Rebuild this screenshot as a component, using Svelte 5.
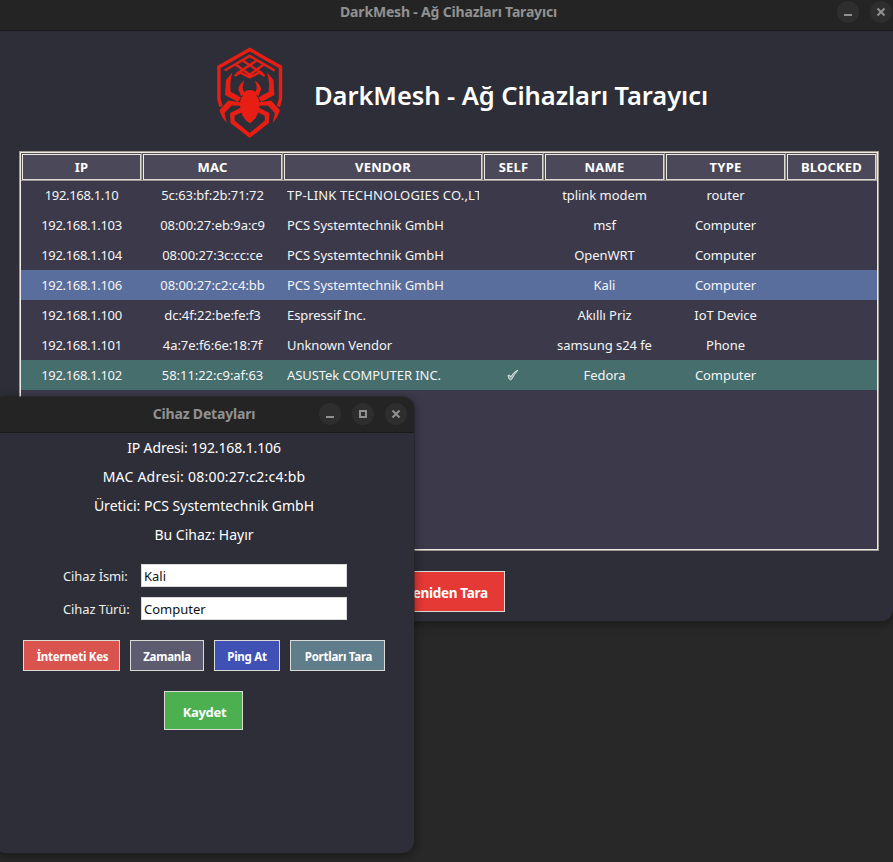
<script>
  const columns = [
    { name: 'IP', w: 121 },
    { name: 'MAC', w: 141 },
    { name: 'VENDOR', w: 200 },
    { name: 'SELF', w: 61 },
    { name: 'NAME', w: 121 },
    { name: 'TYPE', w: 121 },
    { name: 'BLOCKED', w: 91 }
  ];
  const template = columns.map((c) => c.w + 'px').join(' ');
  const devices = [
    ['192.168.1.10', '5c:63:bf:2b:71:72', 'TP-LINK TECHNOLOGIES CO.,LT', '', 'tplink modem', 'router', ''],
    ['192.168.1.103', '08:00:27:eb:9a:c9', 'PCS Systemtechnik GmbH', '', 'msf', 'Computer', ''],
    ['192.168.1.104', '08:00:27:3c:cc:ce', 'PCS Systemtechnik GmbH', '', 'OpenWRT', 'Computer', ''],
    ['192.168.1.106', '08:00:27:c2:c4:bb', 'PCS Systemtechnik GmbH', '', 'Kali', 'Computer', ''],
    ['192.168.1.100', 'dc:4f:22:be:fe:f3', 'Espressif Inc.', '', 'Akıllı Priz', 'IoT Device', ''],
    ['192.168.1.101', '4a:7e:f6:6e:18:7f', 'Unknown Vendor', '', 'samsung s24 fe', 'Phone', ''],
    ['192.168.1.102', '58:11:22:c9:af:63', 'ASUSTek COMPUTER INC.', '✓', 'Fedora', 'Computer', '']
  ];
  const details = [
    { text: 'IP Adresi: 192.168.1.106', cls: 'tight' },
    { text: 'MAC Adresi: 08:00:27:c2:c4:bb', cls: 'wide' },
    { text: 'Üretici: PCS Systemtechnik GmbH', cls: '' },
    { text: 'Bu Cihaz: Hayır', cls: '' }
  ];
</script>

{#snippet control(kind)}
  <span class="control">
    <svg width="22" height="22" viewBox="0 0 22 22">
      {#if kind === 'min'}
        <path d="M7 14h8" />
      {:else if kind === 'max'}
        <path d="M8 8h6v6H8z" />
      {:else}
        <path d="M7.5 7.5l7 7M14.5 7.5l-7 7" />
      {/if}
    </svg>
  </span>
{/snippet}

{#snippet legs()}
  <path d="M16.300 24.500L10 32L9 47L22 54L25 49.500L14.700 43.700Q13.500 35 16.300 24.500z" />
  <path d="M28.500 32.500Q22 37 22.500 42L25 48L29 46L26.500 40Q27 36 28.500 32.500z" />
  <path d="M25 54.500L12.300 52.500L3.500 62Q5 69 10.700 74.500L8.500 65L15.700 57.500L25 57.800z" />
  <path d="M25 59.500L14 65L14.500 75L33.700 90V85L18.500 72.500L18.800 67.500L25.500 64.500z" />
{/snippet}

<div class="desktop">
  <section class="main">
    <header class="bar">
      <span class="caption">DarkMesh - Ağ Cihazları Tarayıcı</span>
      <div class="controls">{@render control('min')}{@render control('close')}</div>
    </header>
    <div class="brand">
      <svg class="logo" width="68" height="92" viewBox="0 0 68 92">
        <g fill="none" stroke="#e81e14">
          <path stroke-width="3.400" d="M5 58.500L2.900 51V19L33.700 1.500L64.500 19V51L62.400 58.500" />
          <path stroke-width="2.400" d="M8.700 22.500L33.700 8L58.700 22.500M26 12L47 26M19 16L36 28.500M41.400 12L20.400 26M48.400 16L31.400 28.500M18.700 28L24 24.500L33.700 29.500L43.400 24.500L48.700 28" />
        </g>
        <g fill="#e81e14">
          <path d="M33.700 42q6.500 0 7 6q3 3 2.700 9q-.5 13-9.700 18.300Q24.500 70 24 57q-.3-6 2.700-9q.5-6 7-6z" />
          {@render legs()}
          <g transform="translate(67.4 0) scale(-1 1)">{@render legs()}</g>
        </g>
      </svg>
      <h1>DarkMesh - Ağ Cihazları Tarayıcı</h1>
    </div>
    <div class="table">
      <div class="row head" style:grid-template-columns={template}>
        {#each columns as c}<div class="th"><span>{c.name}</span></div>{/each}
      </div>
      {#each devices as d, i}
        <div class="row" class:selected={i === 3} class:self={i === 6} style:grid-template-columns={template}>
          {#each d as cell, j}
            <div class="td c{j}" class:long={cell.length > 24}>
              {#if cell === '✓'}
                <svg class="check" width="14" height="14" viewBox="0 0 14 14"><path d="M2 7.500Q4 6 4.700 9Q7.500 3.800 12 2Q8.500 6 5.500 11.500Q3 13 2 7.500z" fill="#8da5a3" stroke="#dce6e5" stroke-width="1" /></svg>
              {:else}{cell}{/if}
            </div>
          {/each}
        </div>
      {/each}
    </div>
    <div class="scan"><button class="rescan">Yeniden Tara</button></div>
  </section>

  <section class="dialog">
    <header class="bar">
      <span class="caption">Cihaz Detayları</span>
      <div class="controls">{@render control('min')}{@render control('max')}{@render control('close')}</div>
    </header>
    <div class="details">
      {#each details as line}<p class={line.cls}>{line.text}</p>{/each}
    </div>
    <div class="form">
      <label><span>Cihaz İsmi:</span><input value="Kali" /></label>
      <label><span>Cihaz Türü:</span><input value="Computer" /></label>
    </div>
    <div class="actions">
      <button class="cut">İnterneti Kes</button>
      <button class="plan">Zamanla</button>
      <button class="ping">Ping At</button>
      <button class="ports">Portları Tara</button>
    </div>
    <button class="save">Kaydet</button>
  </section>
</div>

<style>
  :global(body) { margin: 0; background: #282828; }
  .desktop {
    position: relative;
    width: 893px;
    height: 862px;
    overflow: hidden;
    background: #282828;
    color: #fff;
    font-family: 'Noto Sans', sans-serif;
    font-size: 13px;
  }
  .desktop * { box-sizing: border-box; }
  .main {
    height: 621px;
    background: #2e2e38;
    border-radius: 0 0 12px 0;
    box-shadow: 0 2px 9px 2px rgba(0, 0, 0, 0.3);
    overflow: hidden;
  }
  .bar {
    position: relative;
    display: flex;
    align-items: center;
    justify-content: center;
    background: #242424;
    border-bottom: 1px solid #19191a;
    color: #919191;
    font-size: 14px;
    font-weight: 700;
    letter-spacing: -0.18px;
    white-space: nowrap;
  }
  .main .bar { height: 31px; padding: 0 0 7px 4px; }
  .controls { position: absolute; display: flex; gap: 11px; }
  .main .controls { top: 1px; right: 1px; }
  .control { display: flex; width: 22px; height: 22px; border-radius: 50%; background: #2e2e2e; }
  .control path { fill: none; stroke: #919191; stroke-width: 2; }
  .brand { display: flex; align-items: center; height: 120px; padding-left: 216px; gap: 30px; }
  .logo { flex: none; margin-top: 6px; overflow: visible; }
  h1 { margin: 7px 0 0; font-size: 25.5px; line-height: 36px; font-weight: 600; letter-spacing: -0.07px; white-space: nowrap; }
  .table {
    width: 860px;
    height: 400px;
    margin-left: 19px;
    border: 1px solid #9e9a91;
    background: #3c3a4a;
    box-shadow: inset 0 0 0 1px #eeebe7;
    padding: 1px;
  }
  .row { display: grid; height: 30px; }
  .head { height: 27px; background: #55534f; }
  .th {
    border: 1px solid #9e9a91;
    border-width: 0 1px 1px 0;
    padding: 1px 0 0 1px;
    font-weight: 700;
    letter-spacing: 0.2px;
    height: 28px;
    margin-bottom: -1px;
  }
  .th span {
    display: flex;
    align-items: center;
    justify-content: center;
    height: 100%;
    border: 1px solid #eeebe7;
    border-right-color: #dcdad5;
    border-bottom-color: #dcdad5;
    background: #4b4959;
  }
  .td {
    display: flex;
    align-items: center;
    justify-content: center;
    margin: 0 4px;
    overflow: hidden;
    white-space: nowrap;
    color: #f4f4f5;
    letter-spacing: -0.06px;
  }
  .c0 { letter-spacing: -0.32px; }
  .c2 { justify-content: flex-start; }
  .long { letter-spacing: 0.16px; }
  .check { position: relative; left: -1px; }
  .selected { background: #5a6e9e; }
  .self { background: #456e6d; }
  .scan { display: flex; padding: 20px 0 0 388px; }
  button, input { font: inherit; }
  button { border: 1px solid #dcdad5; color: #fff; font-weight: 700; padding: 2px 0 0; white-space: nowrap; }
  .rescan { width: 117px; height: 41px; background: #e53935; font-size: 13.5px; letter-spacing: -0.32px; }
  .dialog {
    position: absolute;
    left: -6px;
    top: 397px;
    width: 420px;
    height: 456px;
    display: flex;
    flex-direction: column;
    align-items: center;
    border-radius: 12px;
    background: #2e2e38;
    box-shadow: 0 0 0 1px rgba(34, 34, 34, 0.5), 0 2px 9px 2px rgba(0, 0, 0, 0.32);
  }
  .dialog .bar { width: 100%; height: 36px; padding: 0 0 3px; border-radius: 12px 12px 0 0; }
  .dialog .controls { top: 6px; right: 7px; }
  .details { text-align: center; font-size: 14px; }
  p { margin: 0; height: 29px; line-height: 29px; white-space: nowrap; }
  .tight { letter-spacing: -0.13px; }
  .wide { letter-spacing: 0.23px; }
  .form { display: flex; flex-direction: column; gap: 10px; margin-top: 15px; padding-left: 2px; }
  label { display: flex; align-items: center; height: 23px; letter-spacing: -0.12px; }
  label span { width: 78px; color: #eee; white-space: nowrap; }
  input { width: 206px; height: 23px; border: 1px solid #dcdad5; background: #fff; color: #111; padding: 0 2px; border-radius: 0; outline: 0; }
  .actions { display: flex; gap: 10px; margin: 20px 0; font-size: 11.5px; }
  .actions button { height: 31px; padding-left: 2px; letter-spacing: -0.25px; }
  .actions .plan, .actions .ping { padding-left: 0; }
  .cut { width: 97px; background: #d9534f; }
  .plan { width: 74px; background: #5c5b70; }
  .ping { width: 66px; background: #3f51b5; }
  .ports { width: 95px; background: #607d8b; }
  .save { width: 79px; height: 39px; margin-right: 1px; padding-left: 2px; background: #4caf50; letter-spacing: -0.3px; }
</style>
